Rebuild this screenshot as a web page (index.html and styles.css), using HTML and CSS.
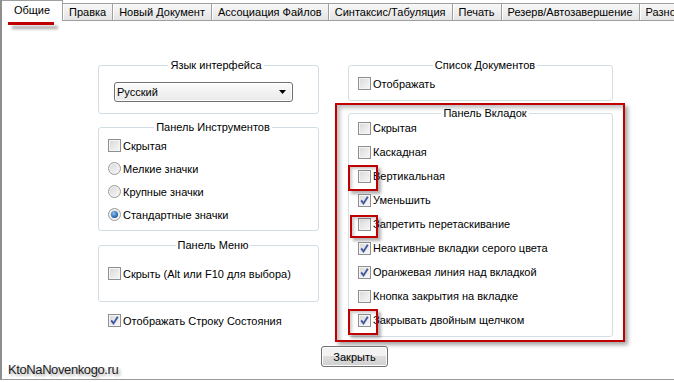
FILE: index.html
```html
<!DOCTYPE html>
<html lang="ru">
<head>
  <meta charset="UTF-8" />
  <title>Настройки</title>
  <link rel="stylesheet" href="styles.css">
</head>
<body>
  <div class="window">
    <div class="tabs">
      <div class="tab active">Общие</div>
      <div class="tab">Правка</div>
      <div class="tab">Новый Документ</div>
      <div class="tab">Ассоциация Файлов</div>
      <div class="tab">Синтаксис/Табуляция</div>
      <div class="tab">Печать</div>
      <div class="tab">Резерв/Автозавершение</div>
      <div class="tab">Разное</div>
    </div>

    <div class="page">
      <div class="cols">
        <div class="col left">
          <fieldset class="group lang">
            <legend>Язык интерфейса</legend>
            <div class="select">
              <span>Русский</span>
              <svg width="7" height="4" viewBox="0 0 7 4"><path d="M0 0h7L3.5 4z" fill="#000"/></svg>
            </div>
          </fieldset>

          <fieldset class="group tools">
            <legend>Панель Инструментов</legend>
            <div class="row"><span class="cb"></span>Скрытая</div>
            <div class="row"><span class="radio"></span>Мелкие значки</div>
            <div class="row"><span class="radio"></span>Крупные значки</div>
            <div class="row"><span class="radio on"></span>Стандартные значки</div>
          </fieldset>

          <fieldset class="group menu">
            <legend>Панель Меню</legend>
            <div class="row"><span class="cb"></span>Скрыть (Alt или F10 для выбора)</div>
          </fieldset>

          <div class="row status">
            <span class="cb"><svg width="13" height="13" viewBox="0 0 13 13"><path d="M3.2 6.4l2.3 3 4.3-6.6" fill="none" stroke="#3b55a0" stroke-width="1.8"/></svg></span>Отображать Строку Состояния
          </div>
        </div>

        <div class="col right">
          <fieldset class="group docs">
            <legend>Список Документов</legend>
            <div class="row"><span class="cb"></span>Отображать</div>
          </fieldset>

          <div class="redframe">
            <fieldset class="group tabpanel">
              <legend>Панель Вкладок</legend>
              <div class="row"><span class="cb"></span>Скрытая</div>
              <div class="row"><span class="cb"></span>Каскадная</div>
              <div class="row"><span class="cb mark"></span>Вертикальная</div>
              <div class="row"><span class="cb"><svg width="13" height="13" viewBox="0 0 13 13"><path d="M3.2 6.4l2.3 3 4.3-6.6" fill="none" stroke="#3b55a0" stroke-width="1.8"/></svg></span>Уменьшить</div>
              <div class="row"><span class="cb mark small"></span>Запретить перетаскивание</div>
              <div class="row"><span class="cb"><svg width="13" height="13" viewBox="0 0 13 13"><path d="M3.2 6.4l2.3 3 4.3-6.6" fill="none" stroke="#3b55a0" stroke-width="1.8"/></svg></span>Неактивные вкладки серого цвета</div>
              <div class="row"><span class="cb"><svg width="13" height="13" viewBox="0 0 13 13"><path d="M3.2 6.4l2.3 3 4.3-6.6" fill="none" stroke="#3b55a0" stroke-width="1.8"/></svg></span>Оранжевая линия над вкладкой</div>
              <div class="row"><span class="cb"></span>Кнопка закрытия на вкладке</div>
              <div class="row"><span class="cb mark"><svg width="13" height="13" viewBox="0 0 13 13"><path d="M3.2 6.4l2.3 3 4.3-6.6" fill="none" stroke="#3b55a0" stroke-width="1.8"/></svg></span>Закрывать двойным щелчком</div>
            </fieldset>
          </div>
        </div>
      </div>

      <div class="footer">
        <button class="btn">Закрыть</button>
      </div>
    </div>

    <div class="watermark">KtoNaNovenkogo.ru</div>
  </div>
</body>
</html>
```

FILE: styles.css
```css
* {
  box-sizing: border-box;
}
body {
  margin: 0;
  background: #fff;
  font-family: "Liberation Sans", Arial, sans-serif;
  font-size: 11px;
  color: #000;
}
.window {
  position: relative;
  width: 674px;
  height: 380px;
  border-left: 2px solid #8e8e8e;
  border-bottom: 1px solid #9a9a9a;
  overflow: hidden;
}

/* вкладки */
.tabs {
  display: flex;
  align-items: flex-end;
  height: 21px;
}
.tab {
  flex: none;
  height: 18px;
  padding: 0 6px;
  line-height: 16px;
  white-space: nowrap;
  border: 1px solid #9f9f9f;
  border-left: none;
  background: linear-gradient(#f8f8f8, #e4e4e4);
  box-shadow: inset 1px 0 #fff;
}
.tab.active {
  position: relative;
  width: 61px;
  height: 21px;
  padding: 0;
  text-align: center;
  line-height: 19px;
  border-bottom: none;
  background: #fff;
  box-shadow: none;
}
/* красная линия под активной вкладкой */
.tab.active::after {
  content: "";
  position: absolute;
  left: 6px;
  top: 21px;
  width: 46px;
  height: 3px;
  background: #c00000;
  box-shadow: 4px 4px 3px rgba(0, 0, 0, 0.35);
}

.page {
  padding-top: 37px;
}
.cols {
  display: flex;
  align-items: flex-start;
  padding-left: 96px;
  gap: 16px;
}
.col.left {
  width: 221px;
}
.col.right {
  width: 290px;
}

/* групповые рамки */
.group {
  margin: 0;
  padding: 0 0 0 9px;
  min-inline-size: 0;
  border: 1px solid #d3dde4;
  border-radius: 3px;
}
.group legend {
  margin: 0 auto;
  padding: 0 2px;
  line-height: 14px;
}
.group.lang {
  padding: 10px 0 11px 15px;
}
.group.tools {
  margin-top: 6px;
  padding-bottom: 4px;
}
.group.menu {
  margin-top: 7px;
  padding-top: 10px;
  padding-bottom: 16px;
}
.group.docs {
  margin-left: 13px;
  width: 265px;
  padding-bottom: 5px;
}
.group.tabpanel {
  width: 265px;
  padding-bottom: 4px;
}
.group.tabpanel .row {
  height: 24px;
}
.group.tabpanel .row:first-of-type {
  margin-top: -4px;
}

.redframe {
  margin-top: 2px;
  padding: 1px 10px 3px 11px;
  border: 2px solid #c00000;
  box-shadow: 3px 3px 4px rgba(0, 0, 0, 0.35), inset 3px 3px 4px rgba(0, 0, 0, 0.25);
}

/* строки с флажками */
.row {
  display: flex;
  align-items: center;
  height: 23px;
  white-space: nowrap;
}
.row.status {
  margin-top: 7px;
  padding-left: 10px;
}
.cb, .radio {
  position: relative;
  flex: none;
  width: 13px;
  height: 13px;
  margin-right: 2px;
  border: 1px solid #8f8f8f;
  background: linear-gradient(135deg, #d8d8d8, #f8f8f8);
  box-shadow: inset 0 0 0 1px #f4f4f4;
}
.cb svg {
  position: absolute;
  left: -1px;
  top: -1px;
}
.radio {
  border-radius: 50%;
  border-color: #9a9a9a;
}
.radio.on::after {
  content: "";
  position: absolute;
  left: 2px;
  top: 2px;
  width: 7px;
  height: 7px;
  border-radius: 50%;
  background: radial-gradient(circle at 40% 35%, #8cc4f2, #1f5aa8 70%);
}
/* красные пометки */
.cb.mark::before {
  content: "";
  position: absolute;
  left: -11px;
  top: -6px;
  width: 26px;
  height: 22px;
  border: 2px solid #c00000;
  box-shadow: 3px 3px 3px rgba(0, 0, 0, 0.3), inset 2px 2px 3px rgba(0, 0, 0, 0.2);
}
.cb.mark.small::before {
  left: -9px;
  top: -4px;
  width: 24px;
  height: 19px;
}

/* выпадающий список */
.select {
  display: flex;
  align-items: center;
  justify-content: space-between;
  width: 179px;
  height: 20px;
  padding: 0 6px 0 2px;
  border: 1px solid #707070;
  border-radius: 3px;
  background: linear-gradient(#fbfbfb, #e9e9e9);
  box-shadow: inset 0 0 0 1px #fff;
}

.footer {
  padding: 4px 0 0 319px;
}
.btn {
  width: 67px;
  height: 21px;
  padding: 0;
  font: inherit;
  color: #000;
  border: 1px solid #707070;
  border-radius: 3px;
  background: linear-gradient(#f2f2f2 50%, #dddddd 50%, #cfcfcf);
  box-shadow: inset 0 0 0 1px #fcfcfc;
}

.watermark {
  position: absolute;
  left: 6px;
  top: 362px;
  font-size: 13px;
  letter-spacing: -0.4px;
  color: #1c1c1c;
  text-shadow: 2px 2px 3px rgba(0, 0, 0, 0.35);
}
```
